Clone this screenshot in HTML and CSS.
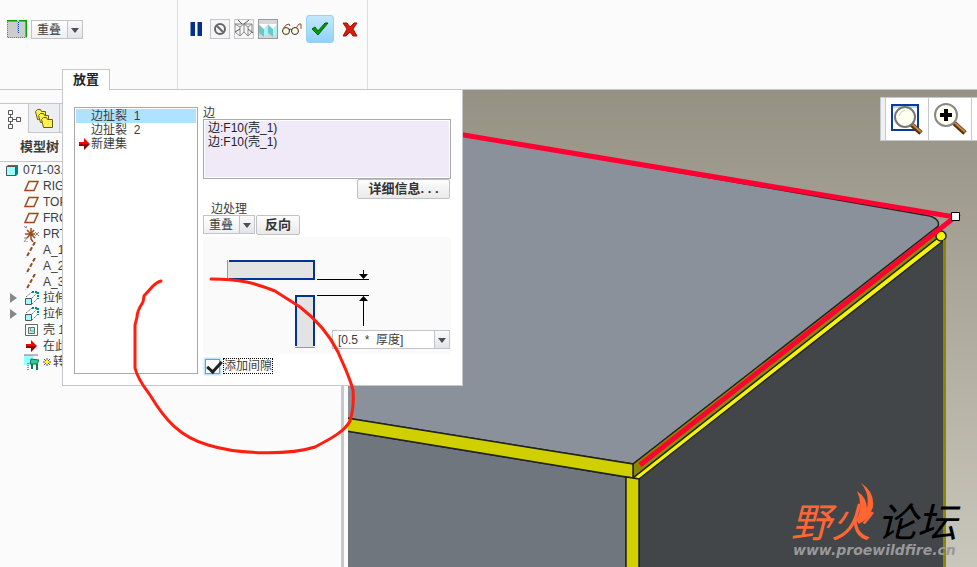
FILE: index.html
```html
<!DOCTYPE html>
<html lang="zh-CN">
<head>
    <meta charset="UTF-8">
    <meta name="viewport" content="width=device-width, initial-scale=1.0">
    <title>边扯裂</title>
    <link rel="stylesheet" href="styles.css">
</head>
<body>
    <header class="ribbon">
        <div class="group group-type">
            <div class="type-row">
                <svg class="rip-icon" width="20" height="18" viewBox="0 0 20 18" aria-hidden="true">
                    <rect width="20" height="18" fill="#ccc"/>
                    <path d="M0 .5h10M12 .5h8M19.5 0v17" stroke="#00a000" stroke-width="2" fill="none"/>
                    <path d="M.5 2v15.500h19" stroke="#777" stroke-dasharray="1 1" fill="none"/>
                    <path d="M10.500 1v12" stroke="#3cc" stroke-dasharray="1 1"/>
                    <path d="M11.500 2v11" stroke="#0040b0" stroke-dasharray="1 1"/>
                </svg>
                <span class="combo">
                    <select aria-label="边类型"><option>重叠</option></select>
                </span>
            </div>
            <button class="tab" type="button">放置</button>
            <section class="panel">
                <ul class="sets" role="listbox" aria-label="集">
                    <li class="selected" role="option" aria-selected="true">边扯裂&nbsp; 1</li>
                    <li role="option">边扯裂&nbsp; 2</li>
                    <li role="option"><svg width="11" height="12" viewBox="0 0 11 12" aria-hidden="true"><path d="M0 4h5V0l6 6H0z" fill="#f00"/><path d="M0 6h11l-6 6V8H0z" fill="#900"/></svg>新建集</li>
                </ul>
                <div class="details">
                    <div class="caption">边</div>
                    <ul class="edges">
                        <li>边:F10(壳_1)</li>
                        <li>边:F10(壳_1)</li>
                    </ul>
                    <button class="btn btn-more" type="button">详细信息. . .</button>
                    <label class="caption treat" for="treatment">边处理</label>
                    <div class="treat-row">
                        <span class="combo">
                            <select id="treatment"><option>重叠</option></select>
                        </span>
                        <button class="btn" type="button">反向</button>
                    </div>
                    <div class="diagram">
                        <svg width="248" height="117" viewBox="203 237 248 117" aria-hidden="true">
                            <path d="M228 261h86v18h-86z" fill="#e3e3e3"/>
                            <path d="M227.500 260v19" stroke="#999"/>
                            <path d="M229 261h85v18h-85" stroke="#039" stroke-width="2" fill="none"/>
                            <path d="M296 296h18v51h-18z" fill="#e3e3e3"/>
                            <path d="M295 347.500h20" stroke="#999"/>
                            <path d="M296 346v-50h18v50" stroke="#039" stroke-width="2" fill="none"/>
                            <path d="M317 279.500h52M317 295.500h52M363.500 270v8M363.500 297v29" stroke="#000"/>
                            <path d="M359 274h9l-4.500 5zM359 301h9l-4.500-5z"/>
                        </svg>
                        <span class="combo gap-value">
                            <input type="text" value="[0.5  *  厚度]" aria-label="间隙">
                        </span>
                    </div>
                    <label class="check">
                        <input type="checkbox" checked>
                        <span>添加间隙</span>
                    </label>
                </div>
            </section>
        </div>
        <div class="group group-tools">
            <button class="tool" type="button" aria-label="暂停">
                <svg width="14" height="14" viewBox="0 0 14 14"><path d="M1 0h5v14H1zM8 0h5v14H8z" fill="#03308f"/><path d="M1.500 0v14M8.500 0v14" stroke="#7996c8"/></svg>
            </button>
            <button class="tool framed" type="button" aria-label="无预览">
                <svg width="14" height="14" viewBox="0 0 14 14" fill="none" stroke="#666" stroke-width="2"><circle cx="7" cy="7" r="5"/><path d="M3.500 3.500l7 7"/></svg>
            </button>
            <button class="tool framed" type="button" aria-label="分离">
                <svg width="20" height="18" viewBox="0 0 20 18" fill="none" stroke="#888"><path d="M1 4l5 3v9l-5-4zM6 7l4-3v8l-4 4M10 12l4 4V7l-4-3M14 7l4-3v8l-4 4M1 4h17"/><path d="M10 4l5-4M4 0l4 4M1 12l5-3M14 9l5 4" stroke="#555"/></svg>
            </button>
            <button class="tool framed pressed" type="button" aria-label="连接">
                <svg width="18" height="18" viewBox="0 0 18 18"><path d="M0 5l5 4v8l-5-4zM9 5l5 4v8l-5-4z" fill="#6cc8c8"/><path d="M5 9l4-4v8l-4 4zM14 9l4-4v8l-4 4z" fill="#a8f4f4"/><path d="M0 4h9L5 9zM9 4h9l-4 5z" fill="#fff"/></svg>
            </button>
            <button class="tool" type="button" aria-label="预览">
                <svg width="20" height="14" viewBox="0 0 20 14" fill="none"><g stroke="#333"><circle cx="4" cy="9" r="3.500" fill="#fff8dc"/><circle cx="13" cy="9" r="3.500" fill="#fff8dc"/><path d="M7 8q2-2 3 0"/></g><path d="M1 7l3-4 3-1 1 2M14 6l3-4h2v5" stroke="#974b28"/></svg>
            </button>
            <button class="tool ok" type="button" aria-label="确定">
                <svg width="18" height="14" viewBox="0 0 18 14"><path d="M1 7l3-2 3 4 7-8h3L7 13z" fill="#00a000" stroke="#056005"/></svg>
            </button>
            <button class="tool cancel" type="button" aria-label="取消">
                <svg width="16" height="15" viewBox="0 0 16 15"><path d="M1 1h4l3 4 4-4h3l-4 6 4 7h-4l-3-4-4 4H1l4-7z" fill="#d91c0b" stroke="#a51508"/></svg>
            </button>
        </div>
    </header>

    <main class="work">
        <aside class="sidebar">
            <div class="side-tabs">
                <button class="side-tab active" type="button" aria-label="模型树">
                    <svg width="14" height="20" viewBox="0 0 14 20" fill="none" stroke="#555"><path d="M1.500 1.500h4v4h-4zM1.500 8.500h4v4h-4zM1.500 15.500h4v4h-4zM9.500 8.500h4v4h-4zM3.500 5.500v3M3.500 12.500v3M5.500 10.500h4"/></svg>
                </button>
                <button class="side-tab" type="button" aria-label="文件夹">
                    <svg width="18" height="19" viewBox="0 0 18 19" stroke="#665c20" fill="#fff04c"><path d="M.5 2.500l2-2h3l1 2h4v7l-8 1z"/><path d="M3.500 6.500l2-2h3l1 2h4v7h-8z"/><path d="M6.500 10.500l2-2h3l1 2h5v8h-9z"/></svg>
                </button>
                <button class="side-tab" type="button" aria-label="收藏夹"></button>
            </div>
            <h2>模型树</h2>
            <ul class="tree">
                <li class="root"><svg width="14" height="13" viewBox="0 0 14 13"><path d="M1 3l2-2h10v9l-2 2H1z" fill="#088"/><path d="M1.500 2.500h9v9h-9z" fill="#9ff" stroke="#555"/></svg>071-03.PRT</li>
                <li><svg class="ico" width="16" height="14" viewBox="0 0 16 14"><path d="M6 2.500h9l-4 9H2z" fill="none" stroke="#974b1e" stroke-width="1.500"/></svg>RIGHT</li>
                <li><svg class="ico" width="16" height="14" viewBox="0 0 16 14"><path d="M6 2.500h9l-4 9H2z" fill="none" stroke="#974b1e" stroke-width="1.500"/></svg>TOP</li>
                <li><svg class="ico" width="16" height="14" viewBox="0 0 16 14"><path d="M6 2.500h9l-4 9H2z" fill="none" stroke="#974b1e" stroke-width="1.500"/></svg>FRONT</li>
                <li><svg class="ico" width="16" height="16" viewBox="0 0 16 16" fill="none"><path d="M8 2v11l2 3M2 8h10M4 4l8 8M4 12l7-8" stroke="#974b1e" stroke-width="1.500"/><path d="M1 0l2 2 1-2M1 12h3l-3 4h4M12 6l4 4M16 6l-4 4" stroke="#888"/></svg>PRT_CSYS_DEF</li>
                <li><svg class="ico" width="16" height="16" viewBox="0 0 16 16"><path d="M12 0L3 16" stroke="#974b1e" stroke-width="2" stroke-dasharray="4 2"/></svg>A_1</li>
                <li><svg class="ico" width="16" height="16" viewBox="0 0 16 16"><path d="M12 0L3 16" stroke="#974b1e" stroke-width="2" stroke-dasharray="4 2"/></svg>A_2</li>
                <li><svg class="ico" width="16" height="16" viewBox="0 0 16 16"><path d="M12 0L3 16" stroke="#974b1e" stroke-width="2" stroke-dasharray="4 2"/></svg>A_3</li>
                <li class="folded"><svg class="ico" width="16" height="16" viewBox="0 0 16 16" fill="none"><path d="M2.500 8.500h6v6h-6z" fill="#9ff" stroke="#555"/><path d="M3 7l6-5M9 8l5-5M9 14l5-5" stroke="#777" stroke-dasharray="2 1"/><path d="M9 2h6v7" stroke="#088" stroke-width="2" stroke-dasharray="2 1"/></svg>拉伸 1</li>
                <li class="folded"><svg class="ico" width="16" height="16" viewBox="0 0 16 16" fill="none"><path d="M2.500 8.500h6v6h-6z" fill="#9ff" stroke="#555"/><path d="M3 7l6-5M9 8l5-5M9 14l5-5" stroke="#777" stroke-dasharray="2 1"/><path d="M9 2h6v7" stroke="#088" stroke-width="2" stroke-dasharray="2 1"/></svg>拉伸 2</li>
                <li><svg class="ico" width="16" height="14" viewBox="0 0 16 14"><path d="M2.500 1.500h12v11h-12z" fill="#fff" stroke="#666"/><path d="M5.500 4.500h6v6h-6z" fill="#9ff" stroke="#666"/><path d="M7.500 4v4h4" fill="none" stroke="#888"/></svg>壳 1</li>
                <li><svg class="ico" width="16" height="12" viewBox="0 0 16 12"><path d="M3 4h5V0l6 6H3z" fill="#f00"/><path d="M3 6h11l-6 6V8H3z" fill="#900"/></svg>在此插入</li>
                <li><svg class="ico" width="16" height="16" viewBox="0 0 16 16"><path d="M1 1h9v10H1z" fill="#9ff"/><path d="M1 1h14" stroke="#777"/><path d="M8 5l8 1-2 4H7z" fill="#3c9" stroke="#075"/><path d="M9 10v5M14 10v6" stroke="#175" stroke-width="2"/><path d="M5 9v7" stroke="#039" stroke-dasharray="1 1"/></svg><svg class="star" width="8" height="8" viewBox="0 0 8 8"><path d="M4 0v8M0 4h8M1 1l6 6M7 1L1 7" stroke="#555"/><path d="M4 2v4M2 4h4" stroke="#ff0" stroke-width="2"/></svg>转换</li>
            </ul>
        </aside>
        <section class="viewport">
            <svg class="scene" viewBox="348 90 629 477" preserveAspectRatio="xMinYMin slice" role="img" aria-label="三维模型">
                <g stroke="#222" stroke-width="1.500">
                    <path d="M348 115L930 216Q942 220 937 229L633 464 340 417z" fill="#8a919a"/>
                    <path d="M340 430L626 477V570H340z" fill="#6f767d"/>
                    <path d="M639 478L944 237V570H639z" fill="#424649"/>
                    <path d="M633 464L937 227V240L633 478z" fill="#8b8700"/>
                    <path d="M340 417L633 464V478L340 430z" fill="#d0d000"/>
                    <path d="M633 478L939 237 943 241 639 479z" fill="#f5f500"/>
                    <path d="M626 477L639 479V570H626z" fill="#d0d000"/>
                    <ellipse cx="941" cy="236" rx="5" ry="5" fill="#f5f500"/>
                </g>
                <path d="M944.500 240V570" stroke="#8b8700" stroke-width="3"/>
                <path d="M440 131L955 217 640 465" fill="none" stroke="#ff0033" stroke-width="5"/>
                <path d="M951.500 212.500h8v8h-8z" fill="#fff" stroke="#000"/>
                <g class="brand">
                    <text x="791" y="537" fill="#ff6633">野火</text>
                    <text x="877" y="537" fill="#000">论坛</text>
                    <path d="M861 483Q875 492 873 507 869 519 859 524L856 520Q864 507 857 491 867 498 867 508 870 494 861 483z" fill="#ff6633"/>
                    <text class="site" x="793" y="555">www.proewildfire.cn</text>
                </g>
            </svg>
            <div class="view-tools">
                <span class="grip"></span>
                <button type="button" aria-label="重新调整">
                    <svg width="34" height="34" viewBox="0 0 34 34" fill="none"><path d="M2 3h26v25H2z" stroke="#0a3d99" stroke-width="2"/><path d="M3 5h24" stroke="#8ac" /><path d="M21 22l10 9" stroke="#583010" stroke-width="5"/><path d="M22 22l9 8" stroke="#c98743" stroke-width="2"/><circle cx="15" cy="15" r="10" fill="#fffff0" stroke="#777" stroke-width="2"/><path d="M9 14q1-5 6-6" stroke="#ccc"/></svg>
                </button>
                <button type="button" aria-label="放大">
                    <svg width="34" height="34" viewBox="0 0 34 34" fill="none"><path d="M21 21l11 10" stroke="#583010" stroke-width="5"/><path d="M22 21l10 9" stroke="#c98743" stroke-width="2"/><circle cx="13" cy="13" r="11" fill="#fffff0" stroke="#888" stroke-width="2"/><path d="M13 7v12M7 13h12" stroke="#000" stroke-width="4"/></svg>
                </button>
                <span class="rest"></span>
            </div>
        </section>
    </main>

    <!-- hand-drawn mark round the gap option -->
    <svg class="mark" width="230" height="180" viewBox="130 275 230 180" aria-hidden="true">
        <path d="M161 281Q157 282 152 287L144 296 143 302Q137 311 137 317L135 325V368C138 380 145 388 150 395C165 420 180 437 208 445C240 455 290 455 315 447C332 438 345 431 350 421C353 412 354 404 353 390C349 375 342 362 338 352C327 330 313 317 300 307L275 291C255 283 240 279 211 279"/>
    </svg>
</body>
</html>
```
FILE: styles.css
```css
* { box-sizing: border-box; }
body { margin: 0; min-height: 100vh; display: flex; flex-direction: column; position: relative; overflow: hidden; background: #fbfbfb; color: #3c3c3c; font: 12px/14px "Liberation Sans", "Noto Sans CJK SC", sans-serif; }
ul { list-style: none; margin: 0; padding: 0; }
button, select, input { font: inherit; color: inherit; margin: 0; }
button { padding: 0; border: 0; background: none; display: flex; align-items: center; justify-content: center; }
svg { display: block; flex: none; }

/* ribbon */
.ribbon { display: flex; height: 90px; border-bottom: 1px solid #c5c7ca; background: #fbfbfb; }
.group { border-right: 1px solid #dcdde0; }
.group-type { width: 178px; position: relative; z-index: 2; display: flex; flex-direction: column; justify-content: space-between; }
.type-row { display: flex; gap: 4px; padding: 20px 0 0 7px; }
.tab { position: relative; z-index: 3; width: 48px; height: 21px; margin: 0 0 -1px 62px; border: 1px solid #c5c7ca; border-bottom: 0; background: #fff; font-size: 13px; font-weight: bold; color: #222; }
.group-tools { width: 190px; display: flex; align-items: center; gap: 4px; padding: 0 0 31px 8px; }
.tool { width: 20px; height: 20px; }
.framed { border: 1px solid #c5c7ca; background: #f5f5f5; overflow: hidden; }
.pressed { background: #d5d7da; border-color: #999; }
.ok { width: 28px; height: 28px; border: 1px solid #99d1f5; border-radius: 3px; background: linear-gradient(#c3e7ff, #8fd2fa); }
.cancel { width: 24px; }

.combo { position: relative; display: flex; width: 52px; height: 19px; border: 1px solid #c0c3c8; background: linear-gradient(#fff, #efefef); }
.combo select, .combo input { appearance: none; width: 100%; border: 0; padding: 0 14px 0 5px; background: none; outline: 0; }
.combo::before { content: ""; position: absolute; right: 0; top: 0; bottom: 0; width: 14px; border-left: 1px solid #c0c3c8; background: linear-gradient(#fafafa, #e2e4e8); pointer-events: none; }
.combo::after { content: ""; position: absolute; right: 3px; top: 7px; border: 4px solid transparent; border-top: 5px solid #4b4d58; border-bottom: 0; pointer-events: none; }
.btn { height: 20px; padding: 0 8px; border: 1px solid #bfc1c4; border-radius: 2px; background: linear-gradient(#fdfdfd, #e9e9e9); font-size: 13px; font-weight: bold; color: #333; }

/* placement panel */
.panel { position: absolute; left: 62px; top: 89px; width: 401px; display: flex; gap: 5px; padding: 17px 11px 11px; border: 1px solid #c5c7ca; background: #fff; }
.sets { width: 124px; padding: 1px; border: 1px solid #a9a9a9; }
.sets li { display: flex; align-items: center; gap: 1px; height: 14px; padding-left: 15px; }
.sets svg { margin-left: -12px; }
.sets .selected { background: #aee2ff; }
.details { flex: 1; display: flex; flex-direction: column; }
.caption { height: 12px; line-height: 12px; }
.edges { height: 60px; padding: 1px 4px; border: 1px solid #aaa; background: #f0eaf8; box-shadow: inset 0 0 0 1px #fff; color: #222; }
.btn-more { align-self: flex-end; width: 93px; margin-right: 1px; }
.treat { margin: 4px 0 0 8px; }
.treat-row { display: flex; gap: 1px; }
.diagram { position: relative; margin-top: 2px; background: #fafafa; }
.gap-value { position: absolute; right: 1px; bottom: 5px; width: 118px; background: #fff; }
.check { display: flex; align-items: center; gap: 3px; margin-top: 4px; padding-left: 2px; }
.check input { appearance: none; width: 15px; height: 15px; border: 1px solid #8a98a5; background: #fff; box-shadow: 0 0 2px 1px #9bd8ff; position: relative; }
.check input:checked::after { content: ""; position: absolute; left: 4px; top: -2px; width: 6px; height: 12px; border: solid #222; border-width: 0 3px 3px 0; transform: rotate(42deg); }
.check span { border: 1px dotted #000; }

/* model tree */
.work { flex: 1; display: flex; }
.sidebar { width: 344px; padding-top: 13px; border-right: 3px solid #c5c9cb; }
.side-tabs { display: flex; height: 30px; }
.side-tab { width: 31px; border: 1px solid #c5c7ca; border-left: 0; background: #eceef2; }
.side-tab.active { width: 29px; border-bottom: 0; background: #fbfbfb; }
h2 { margin: 0; padding: 7px 0 7px 20px; border-bottom: 1px solid #c5c7ca; font-size: 13px; line-height: 14px; }
.tree li { position: relative; display: flex; align-items: center; gap: 4px; height: 16px; padding-left: 23px; }
.tree .root { padding-left: 5px; }
.tree .folded::before { content: ""; position: absolute; left: 10px; border: 5px solid transparent; border-left: 7px solid #888; border-right: 0; }
.star { margin-right: -2px; }

/* graphics area */
.viewport { flex: 1; position: relative; margin-left: 4px; background: linear-gradient(#959183, #c9c6bb); }
.scene { position: absolute; width: 100%; height: 100%; }
.brand { font: italic 400 40px "Noto Sans CJK SC", sans-serif; }
.site { font: italic bold 14px "DejaVu Sans", sans-serif; fill: #999; }
.view-tools { position: absolute; right: 0; top: 7px; display: flex; height: 44px; border: 1px solid #c5c9cc; border-right: 0; background: #fff; }
.view-tools button { width: 43px; border-left: 1px solid #c5c9cc; }
.grip { width: 4px; background: #eef0f3; }
.rest { width: 6px; border-left: 1px solid #c5c9cc; }

.mark { position: absolute; left: 130px; top: 275px; z-index: 5; pointer-events: none; }
.mark path { fill: none; stroke: #ff1e0f; stroke-width: 3px; stroke-linecap: round; }
```
